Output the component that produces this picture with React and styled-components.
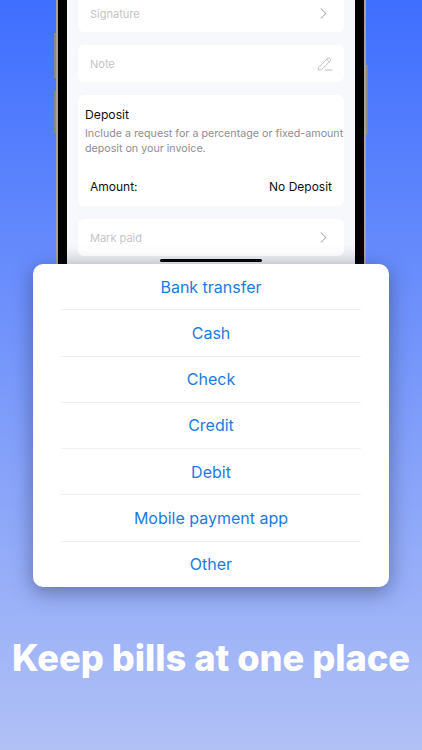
import React from 'react'
import styled, { createGlobalStyle } from 'styled-components'
import { ChevronRight } from 'lucide-react'

const methods = ['Bank transfer', 'Cash', 'Check', 'Credit', 'Debit', 'Mobile payment app', 'Other']

const GlobalStyle = createGlobalStyle`
	html, body {
		margin: 0;
		padding: 0;
	}
	body {
		font-family: 'Inter', 'Liberation Sans', sans-serif;
	}
`

const PenIcon = () => (
	<svg width="15" height="15" viewBox="0 0 15 15" fill="none" stroke="#b9b9be" strokeWidth="0.9" strokeLinejoin="round" strokeLinecap="round">
		<path d="M1 11.2 9.9 2.2a1.2 1.2 0 0 1 1.7 0l.9.9a1.2 1.2 0 0 1 0 1.7L3.6 13.6 0.8 14Z" />
		<path d="M8.9 3.2 11.6 5.9" />
		<path d="M7.5 14H14" />
	</svg>
)

const App = () => {
	return (
		<Page>
			<GlobalStyle />
			<Phone>
				<SideButton $top={33} $height={45} />
				<SideButton $top={91} $height={42} />
				<PowerButton />
				<Screen>
					<Card>
						<Placeholder>Signature</Placeholder>
						<ChevronRight size={19} color="#a9a9ae" strokeWidth={1.3} />
					</Card>
					<Card>
						<Placeholder>Note</Placeholder>
						<PenIcon />
					</Card>
					<DepositCard>
						<DepositTitle>Deposit</DepositTitle>
						<DepositText>
							Include a request for a percentage or fixed-amount
							<br />
							deposit on your invoice.
						</DepositText>
						<AmountRow>
							<span>Amount:</span>
							<span>No Deposit</span>
						</AmountRow>
					</DepositCard>
					<Card>
						<Placeholder>Mark paid</Placeholder>
						<ChevronRight size={19} color="#a9a9ae" strokeWidth={1.3} />
					</Card>
					<HomeBar />
				</Screen>
			</Phone>
			<Sheet>
				{methods.map((m) => (
					<SheetRow key={m}>{m}</SheetRow>
				))}
			</Sheet>
			<Headline>Keep bills at one place</Headline>
		</Page>
	)
}

export default App

const Page = styled.div`
	width: 422px;
	height: 750px;
	overflow: hidden;
	display: flex;
	flex-direction: column;
	align-items: center;
	background: linear-gradient(180deg, #3f6fff 0%, #b1c1f6 100%);
`
const Phone = styled.div`
	position: relative;
	width: 310px;
	height: 264px;
	flex-shrink: 0;
	box-sizing: border-box;
	background: #000;
	border-left: 2px solid #a8a294;
	border-right: 2px solid #a8a294;
	padding: 0 9px;
`
const SideButton = styled.div`
	position: absolute;
	left: -4px;
	top: ${(p) => p.$top}px;
	width: 2px;
	height: ${(p) => p.$height}px;
	background: #8d8a84;
`
const PowerButton = styled.div`
	position: absolute;
	right: -4px;
	top: 65px;
	width: 2px;
	height: 70px;
	background: #8d8a84;
`
const Screen = styled.div`
	position: relative;
	height: 100%;
	overflow: hidden;
	display: flex;
	flex-direction: column;
	justify-content: flex-end;
	gap: 13px;
	padding: 0 11px 8px 11px;
	box-sizing: border-box;
	background: linear-gradient(180deg, #f7f8fc 0%, #f7f8fc 92%, #e9e9ee 100%);
`
const Card = styled.div`
	height: 37px;
	flex-shrink: 0;
	box-sizing: border-box;
	background: #fff;
	border-radius: 6px;
	padding: 0 11px 0 12px;
	display: flex;
	align-items: center;
	justify-content: space-between;
`
const Placeholder = styled.span`
	font-size: 11px;
	color: #c4c4c8;
`
const DepositCard = styled.div`
	height: 111px;
	flex-shrink: 0;
	box-sizing: border-box;
	background: #fff;
	border-radius: 6px;
	padding: 12px 0 0 7px;
	display: flex;
	flex-direction: column;
`
const DepositTitle = styled.div`
	font-size: 12.2px;
	line-height: 16px;
	color: #111;
`
const DepositText = styled.div`
	font-size: 10.7px;
	line-height: 15px;
	color: #8e8e93;
	margin-top: 3px;
	white-space: nowrap;
`
const AmountRow = styled.div`
	display: flex;
	justify-content: space-between;
	font-size: 12px;
	line-height: 16px;
	color: #111;
	padding: 0 12px 0 5px;
	margin-top: 23px;
`
const HomeBar = styled.div`
	position: absolute;
	left: 93px;
	bottom: 2px;
	width: 102px;
	height: 3px;
	border-radius: 2px;
	background: #000;
`
const Sheet = styled.div`
	position: relative;
	width: 356px;
	height: 323px;
	flex-shrink: 0;
	background: #fff;
	border-radius: 10px;
	box-shadow: 0 5px 20px rgba(40, 50, 90, 0.5);
	display: flex;
	flex-direction: column;
`
const SheetRow = styled.div`
	flex: 1;
	margin: 0 28px;
	display: flex;
	align-items: center;
	justify-content: center;
	font-size: 16px;
	color: #1c7be0;
	border-bottom: 1px solid #f0f0f2;
	&:last-child {
		border-bottom: none;
	}
`
const Headline = styled.h1`
	margin: 47px 0 0;
	font-size: 36.2px;
	line-height: 48px;
	font-weight: 800;
	color: #fff;
	white-space: nowrap;
`
